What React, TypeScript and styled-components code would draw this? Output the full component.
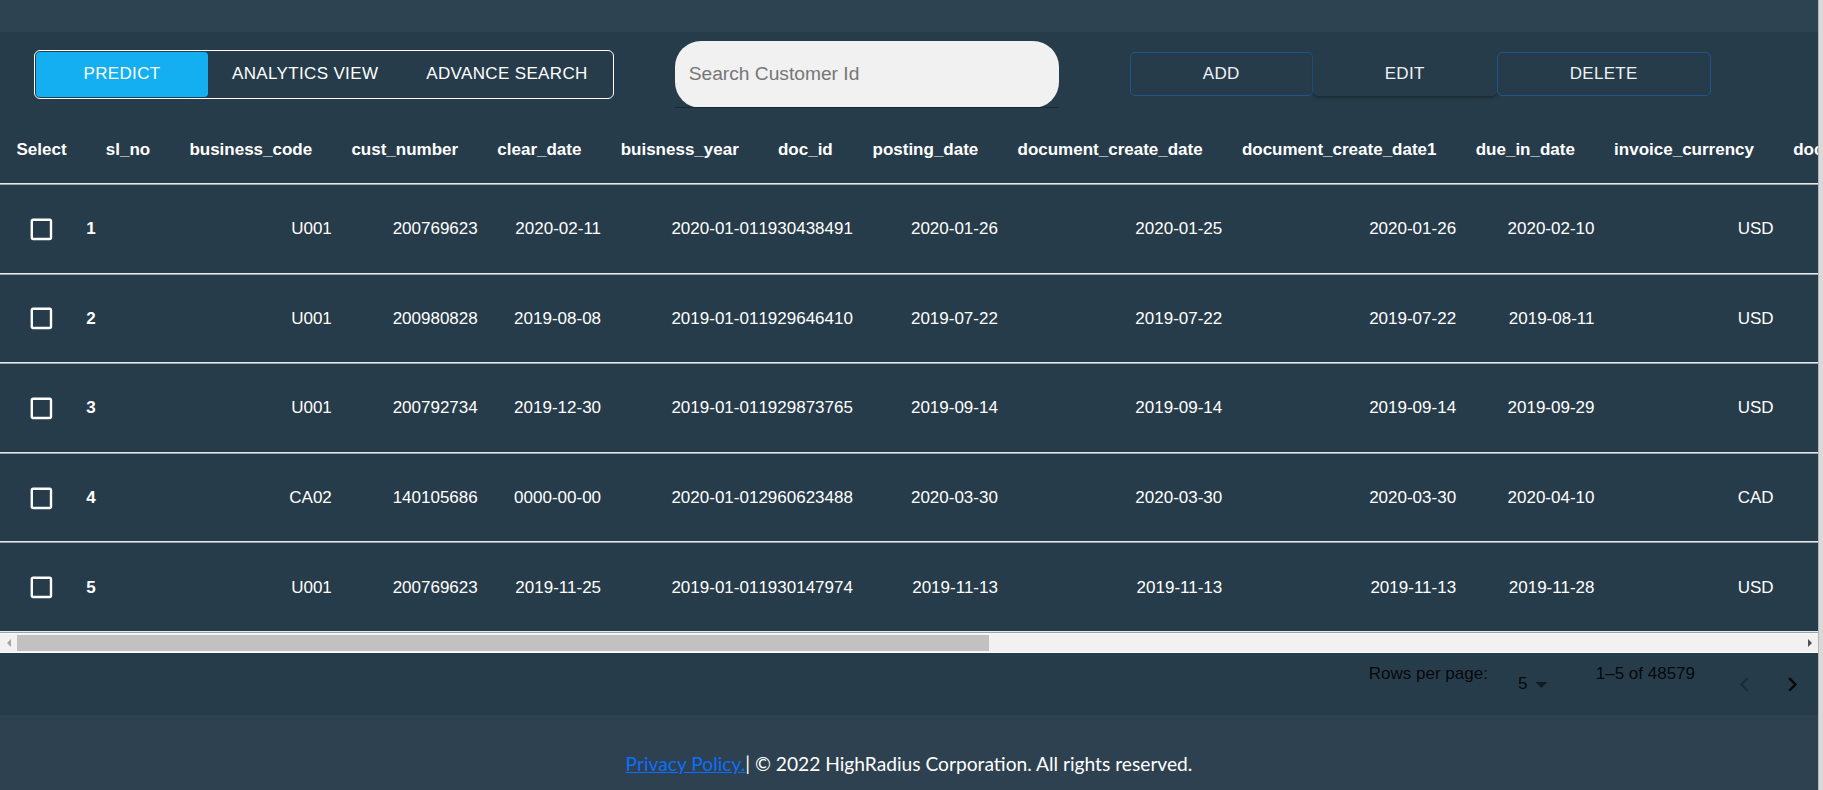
import React from "react";
import styled, { createGlobalStyle } from "styled-components";

const GlobalStyle = createGlobalStyle`
  html, body {
    margin: 0;
    padding: 0;
  }
  body {
    background: #273c4a;
    font-family: "Liberation Sans", Arial, Helvetica, sans-serif;
    overflow: hidden;
  }
  * {
    box-sizing: border-box;
  }
`;

const Page = styled.div`
  display: flex;
  height: 100vh;
  width: 100vw;
`;

const Main = styled.div`
  flex: 1;
  min-width: 0;
  display: flex;
  flex-direction: column;
  background: #273c4a;
`;

const Rail = styled.div`
  width: 5px;
  background: #d9d9d9;
  border-left: 1px solid #b5b5b5;
`;

const TopBand = styled.div`
  height: 32px;
  background: #2d4352;
`;

const Toolbar = styled.div`
  height: 84px;
  display: flex;
  align-items: center;
  padding: 0 0 0 34px;
`;

const ToggleGroup = styled.div`
  display: flex;
  height: 49px;
  border: 1.5px solid #ffffff;
  border-radius: 6px;
  padding: 1px;
`;

const ToggleItem = styled.div<{ $active?: boolean; $width?: number }>`
  display: flex;
  align-items: center;
  justify-content: center;
  width: ${(p) => (p.$width ? `${p.$width}px` : "auto")};
  padding: ${(p) => (p.$width ? "0" : "0 24px")};
  background: ${(p) => (p.$active ? "#14aff1" : "transparent")};
  border-radius: 4px;
  color: #ffffff;
  font-size: 17px;
  letter-spacing: 0.35px;
  text-transform: uppercase;
`;

const SearchBox = styled.div`
  position: relative;
  margin-left: 61px;
  width: 384px;
  height: 67px;

  &::after {
    content: "";
    position: absolute;
    left: 0;
    right: 0;
    bottom: 0;
    height: 1px;
    background: #1b2731;
  }
`;

const SearchInput = styled.input`
  width: 100%;
  height: 100%;
  border: none;
  outline: none;
  border-radius: 26px;
  background: #f1f1f1;
  padding: 0 14px;
  font-family: "Liberation Sans", Arial, sans-serif;
  font-size: 19.2px;
  color: #333;

  &::placeholder {
    color: #767676;
  }
`;

const ActionGroup = styled.div`
  display: flex;
  margin-left: 71px;
`;

const ActionButton = styled.button<{ $width: number; $raised?: boolean }>`
  width: ${(p) => p.$width}px;
  height: 44px;
  background: #273c4a;
  border: 1px solid ${(p) => (p.$raised ? "transparent" : "#1f5587")};
  border-radius: 5px;
  box-shadow: ${(p) => (p.$raised ? "0 2px 3px rgba(0, 0, 0, 0.28)" : "none")};
  color: #eef2f5;
  font-family: "Liberation Sans", Arial, sans-serif;
  font-size: 17px;
  letter-spacing: 0.3px;
  text-transform: uppercase;
`;

const TableViewport = styled.div`
  overflow: hidden;
  width: 100%;
`;

const DataTable = styled.table`
  border-collapse: separate;
  border-spacing: 0;
  width: max-content;
  color: #ffffff;
  font-size: 17px;
  white-space: nowrap;
`;

const HeadRow = styled.tr`
  height: 69px;
`;

const BodyRow = styled.tr`
  height: 89.6px;
`;

const HeadCell = styled.th<{ $first?: boolean }>`
  padding: 0 19.6px 0 ${(p) => (p.$first ? "16.5px" : "19.6px")};
  text-align: left;
  font-weight: 700;
  border-bottom: 1px solid #99a3aa;
  box-shadow: inset 0 -1px 0 #e6e8ea;
`;

const BodyCell = styled.td<{ $bold?: boolean; $left?: boolean }>`
  padding: 0;
  text-align: ${(p) => (p.$left ? "left" : "right")};
  font-weight: ${(p) => (p.$bold ? 700 : 400)};
  border-bottom: 1px solid #99a3aa;
  box-shadow: inset 0 -1px 0 #e6e8ea;
`;

const CheckCell = styled.td`
  padding: 0 0 0 27px;
  text-align: left;
  border-bottom: 1px solid #99a3aa;
  box-shadow: inset 0 -1px 0 #e6e8ea;

  svg {
    display: block;
  }
`;

const Scrollbar = styled.div`
  height: 20px;
  display: flex;
  align-items: stretch;
  background: #f1f1f1;
  border-top: 1px solid #fafafa;
  border-bottom: 1px solid #fafafa;
`;

const ScrollArrow = styled.div<{ $dark?: boolean; $right?: boolean }>`
  width: 17px;
  display: flex;
  align-items: center;
  justify-content: center;
  margin-left: ${(p) => (p.$right ? "auto" : "0")};

  &::before {
    content: "";
    border-top: 4px solid transparent;
    border-bottom: 4px solid transparent;
    ${(p) =>
      p.$right
        ? `border-left: 4px solid ${p.$dark ? "#505050" : "#a3a3a3"};`
        : `border-right: 4px solid ${p.$dark ? "#505050" : "#a3a3a3"};`}
  }
`;

const ScrollThumb = styled.div<{ $width: number }>`
  width: ${(p) => p.$width}px;
  margin: 1px 0;
  background: #c1c1c1;
`;

const Pagination = styled.div`
  height: 62px;
  display: flex;
  align-items: center;
  justify-content: flex-end;
  padding-right: 11.5px;
  color: rgba(0, 0, 0, 0.87);
  font-size: 17px;
`;

const PageLabel = styled.p`
  margin: 0 0 20px;
`;

const RowsSelect = styled.div`
  display: flex;
  align-items: center;
  margin-left: 30px;

  svg {
    display: block;
  }
`;

const PageCount = styled.p`
  margin: 0 0 20px 39.6px;
`;

const PageArrow = styled.div<{ $gap: number; $disabled?: boolean }>`
  margin-left: ${(p) => p.$gap}px;
  color: ${(p) => (p.$disabled ? "rgba(0, 0, 0, 0.26)" : "rgba(0, 0, 0, 0.87)")};

  svg {
    display: block;
  }
`;

const Footer = styled.footer`
  flex: 1;
  background: #2d4150;
  display: flex;
  justify-content: center;
  align-items: flex-start;
  padding-top: 37px;
`;

const FooterText = styled.div`
  font-family: "Lato", "Open Sans", sans-serif;
  font-size: 19.2px;
  line-height: 24px;
  color: #ffffff;
`;

const PolicyLink = styled.a`
  color: #0d6efd;
  text-decoration: underline;
`;

const columns = [
  "sl_no",
  "business_code",
  "cust_number",
  "clear_date",
  "buisness_year",
  "doc_id",
  "posting_date",
  "document_create_date",
  "document_create_date1",
  "due_in_date",
  "invoice_currency",
  "document_type",
  "posting_id",
  "area_business",
  "total_open_amount",
  "baseline_create_date",
  "cust_payment_terms",
  "invoice_id",
];

const rows = [
  ["1", "U001", "200769623", "2020-02-11", "2020-01-01", "1930438491", "2020-01-26", "2020-01-25", "2020-01-26", "2020-02-10", "USD", "RV", "1", "", "54273.28", "2020-01-26", "NAH4", "1930438491"],
  ["2", "U001", "200980828", "2019-08-08", "2019-01-01", "1929646410", "2019-07-22", "2019-07-22", "2019-07-22", "2019-08-11", "USD", "RV", "1", "", "79656.6", "2019-07-22", "NAD1", "1929646410"],
  ["3", "U001", "200792734", "2019-12-30", "2019-01-01", "1929873765", "2019-09-14", "2019-09-14", "2019-09-14", "2019-09-29", "USD", "RV", "1", "", "2253.86", "2019-09-14", "NAA8", "1929873765"],
  ["4", "CA02", "140105686", "0000-00-00", "2020-01-01", "2960623488", "2020-03-30", "2020-03-30", "2020-03-30", "2020-04-10", "CAD", "RV", "1", "", "3299.7", "2020-03-31", "CA10", "2960623488"],
  ["5", "U001", "200769623", "2019-11-25", "2019-01-01", "1930147974", "2019-11-13", "2019-11-13", "2019-11-13", "2019-11-28", "USD", "RV", "1", "", "33133.29", "2019-11-13", "NAH4", "1930147974"],
];

const CheckIcon = () => (
  <svg width="28.8" height="28.8" viewBox="0 0 24 24" fill="#ffffff">
    <path d="M19 5v14H5V5h14m0-2H5c-1.11 0-2 .9-2 2v14c0 1.1.89 2 2 2h14c1.1 0 2-.9 2-2V5c0-1.1-.9-2-2-2z" />
  </svg>
);

const DropIcon = () => (
  <svg width="28.8" height="28.8" viewBox="0 0 24 24" fill="rgba(0,0,0,0.54)">
    <path d="M7 10l5 5 5-5z" />
  </svg>
);

const ChevronLeft = () => (
  <svg width="28.8" height="28.8" viewBox="0 0 24 24" fill="currentColor">
    <path d="M15.41 16.59 10.83 12l4.58-4.59L14 6l-6 6 6 6 1.41-1.41z" />
  </svg>
);

const ChevronRight = () => (
  <svg width="28.8" height="28.8" viewBox="0 0 24 24" fill="currentColor">
    <path d="M8.59 16.59 13.17 12 8.59 7.41 10 6l6 6-6 6-1.41-1.41z" />
  </svg>
);

const App = () => {
  return (
    <>
      <GlobalStyle />
      <Page>
        <Main>
          <TopBand />
          <Toolbar>
            <ToggleGroup>
              <ToggleItem $active $width={172}>
                Predict
              </ToggleItem>
              <ToggleItem>Analytics View</ToggleItem>
              <ToggleItem>Advance Search</ToggleItem>
            </ToggleGroup>
            <SearchBox>
              <SearchInput placeholder="Search Customer Id" />
            </SearchBox>
            <ActionGroup>
              <ActionButton $width={183}>Add</ActionButton>
              <ActionButton $width={184} $raised>
                Edit
              </ActionButton>
              <ActionButton $width={214}>Delete</ActionButton>
            </ActionGroup>
          </Toolbar>

          <TableViewport>
            <DataTable>
              <thead>
                <HeadRow>
                  <HeadCell $first>Select</HeadCell>
                  {columns.map((c) => (
                    <HeadCell key={c}>{c}</HeadCell>
                  ))}
                </HeadRow>
              </thead>
              <tbody>
                {rows.map((r) => (
                  <BodyRow key={r[0]}>
                    <CheckCell>
                      <CheckIcon />
                    </CheckCell>
                    {r.map((v, i) => (
                      <BodyCell key={i} $bold={i === 0} $left={i === 0}>
                        {v}
                      </BodyCell>
                    ))}
                  </BodyRow>
                ))}
              </tbody>
            </DataTable>
          </TableViewport>

          <Scrollbar>
            <ScrollArrow />
            <ScrollThumb $width={972} />
            <ScrollArrow $right $dark />
          </Scrollbar>

          <Pagination>
            <PageLabel>Rows per page:</PageLabel>
            <RowsSelect>
              <span>5</span>
              <DropIcon />
            </RowsSelect>
            <PageCount>1–5 of 48579</PageCount>
            <PageArrow $gap={35.4} $disabled>
              <ChevronLeft />
            </PageArrow>
            <PageArrow $gap={18.5}>
              <ChevronRight />
            </PageArrow>
          </Pagination>

          <Footer>
            <FooterText>
              <PolicyLink href="#">Privacy Policy.</PolicyLink>| © 2022 HighRadius Corporation. All rights reserved.
            </FooterText>
          </Footer>
        </Main>
        <Rail />
      </Page>
    </>
  );
};

export default App;
